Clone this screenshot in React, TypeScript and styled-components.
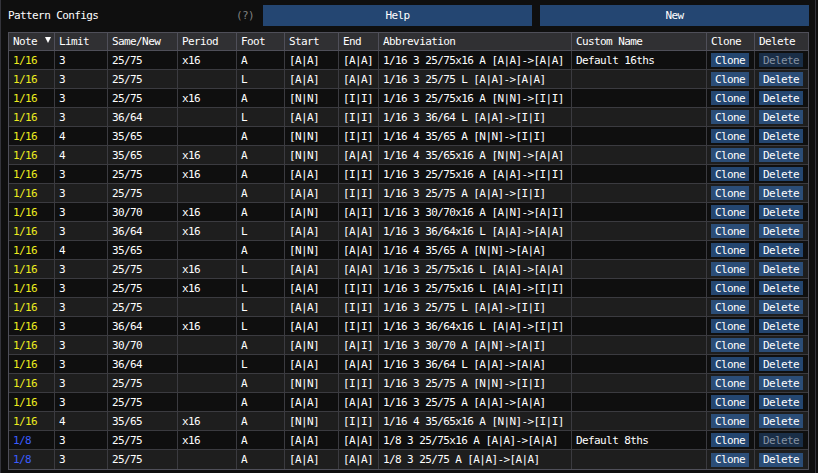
import React from "react";
import styled, { createGlobalStyle } from "styled-components";

const Global = createGlobalStyle`
  html, body { margin: 0; padding: 0; background: #0f0f0f; }
  body { font-family: "DejaVu Sans Mono", monospace; font-size: 11px; letter-spacing: -0.6px; color: #ffffff; }
`;

const Window = styled.div`
  width: 816px;
  height: 473px;
  box-sizing: border-box;
  border-left: 1px solid #34343b;
  border-right: 1px solid #34343b;
  padding: 5px 0 0 7px;
  overflow: hidden;
`;

const TopBar = styled.div`
  display: flex;
  align-items: center;
  gap: 8px;
  height: 21px;
  margin-bottom: 6px;
`;

const Title = styled.div`
  width: 228px;
  flex: none;
  margin-right: -8px;
`;

const HelpMark = styled.div`
  color: #808080;
  width: 27px;
  flex: none;
  margin-right: -8px;
`;

const BarButton = styled.div`
  width: 269px;
  flex: none;
  height: 21px;
  background: #244672;
  display: flex;
  align-items: center;
  justify-content: center;
`;

const Table = styled.div`
  width: 801px;
  border: 1px solid #4f4f59;
  box-sizing: border-box;
`;

const cols = "46px 53px 70px 59px 48px 54px 40px 193px 135px 48px 53px";

const Row = styled.div<{ $alt?: boolean; $head?: boolean }>`
  display: grid;
  grid-template-columns: ${cols};
  height: ${(p) => (p.$head ? "18px" : "19px")};
  box-sizing: border-box;
  border-bottom: 1px solid ${(p) => (p.$head ? "#4f4f59" : "#3b3b40")};
  background: ${(p) => (p.$head ? "#303033" : p.$alt ? "#1e1e1e" : "#0f0f0f")};
  &:last-child { border-bottom: none; }
`;

const Cell = styled.div<{ $color?: string; $head?: boolean }>`
  display: flex;
  align-items: center;
  padding-left: 4px;
  box-sizing: border-box;
  border-right: 1px solid ${(p) => (p.$head ? "#4f4f59" : "#3b3b40")};
  color: ${(p) => p.$color || "#ffffff"};
  white-space: nowrap;
  overflow: hidden;
  position: relative;
  &:last-child { border-right: none; }
`;

const SortArrow = styled.svg`
  position: absolute;
  right: 3px;
  top: 4px;
`;

const TButton = styled.div<{ $disabled?: boolean; $alt?: boolean }>`
  height: 14px;
  padding: 0 4px;
  display: flex;
  align-items: center;
  background: ${(p) =>
    p.$disabled ? (p.$alt ? "#1f3148" : "#1a2e47") : p.$alt ? "#2b4d77" : "#244670"};
  color: ${(p) => (p.$disabled ? "#8592a2" : "#ffffff")};
`;

type R = [string, string, string, string, string, string, string, string, string, boolean];

const rows: R[] = [
  ["1/16", "3", "25/75", "x16", "A", "[A|A]", "[A|A]", "1/16 3 25/75x16 A [A|A]->[A|A]", "Default 16ths", true],
  ["1/16", "3", "25/75", "", "L", "[A|A]", "[A|A]", "1/16 3 25/75 L [A|A]->[A|A]", "", false],
  ["1/16", "3", "25/75", "x16", "A", "[N|N]", "[I|I]", "1/16 3 25/75x16 A [N|N]->[I|I]", "", false],
  ["1/16", "3", "36/64", "", "L", "[A|A]", "[I|I]", "1/16 3 36/64 L [A|A]->[I|I]", "", false],
  ["1/16", "4", "35/65", "", "A", "[N|N]", "[I|I]", "1/16 4 35/65 A [N|N]->[I|I]", "", false],
  ["1/16", "4", "35/65", "x16", "A", "[N|N]", "[A|A]", "1/16 4 35/65x16 A [N|N]->[A|A]", "", false],
  ["1/16", "3", "25/75", "x16", "A", "[A|A]", "[I|I]", "1/16 3 25/75x16 A [A|A]->[I|I]", "", false],
  ["1/16", "3", "25/75", "", "A", "[A|A]", "[I|I]", "1/16 3 25/75 A [A|A]->[I|I]", "", false],
  ["1/16", "3", "30/70", "x16", "A", "[A|N]", "[A|I]", "1/16 3 30/70x16 A [A|N]->[A|I]", "", false],
  ["1/16", "3", "36/64", "x16", "L", "[A|A]", "[A|A]", "1/16 3 36/64x16 L [A|A]->[A|A]", "", false],
  ["1/16", "4", "35/65", "", "A", "[N|N]", "[A|A]", "1/16 4 35/65 A [N|N]->[A|A]", "", false],
  ["1/16", "3", "25/75", "x16", "L", "[A|A]", "[A|A]", "1/16 3 25/75x16 L [A|A]->[A|A]", "", false],
  ["1/16", "3", "25/75", "x16", "L", "[A|A]", "[I|I]", "1/16 3 25/75x16 L [A|A]->[I|I]", "", false],
  ["1/16", "3", "25/75", "", "L", "[A|A]", "[I|I]", "1/16 3 25/75 L [A|A]->[I|I]", "", false],
  ["1/16", "3", "36/64", "x16", "L", "[A|A]", "[I|I]", "1/16 3 36/64x16 L [A|A]->[I|I]", "", false],
  ["1/16", "3", "30/70", "", "A", "[A|N]", "[A|I]", "1/16 3 30/70 A [A|N]->[A|I]", "", false],
  ["1/16", "3", "36/64", "", "L", "[A|A]", "[A|A]", "1/16 3 36/64 L [A|A]->[A|A]", "", false],
  ["1/16", "3", "25/75", "", "A", "[N|N]", "[I|I]", "1/16 3 25/75 A [N|N]->[I|I]", "", false],
  ["1/16", "3", "25/75", "", "A", "[A|A]", "[A|A]", "1/16 3 25/75 A [A|A]->[A|A]", "", false],
  ["1/16", "4", "35/65", "x16", "A", "[N|N]", "[I|I]", "1/16 4 35/65x16 A [N|N]->[I|I]", "", false],
  ["1/8", "3", "25/75", "x16", "A", "[A|A]", "[A|A]", "1/8 3 25/75x16 A [A|A]->[A|A]", "Default 8ths", true],
  ["1/8", "3", "25/75", "", "A", "[A|A]", "[A|A]", "1/8 3 25/75 A [A|A]->[A|A]", "", false],
];

const headers = ["Note", "Limit", "Same/New", "Period", "Foot", "Start", "End", "Abbreviation", "Custom Name", "Clone", "Delete"];

export default function App() {
  return (
    <>
      <Global />
      <Window>
        <TopBar>
          <Title>Pattern Configs</Title>
          <HelpMark>(?)</HelpMark>
          <BarButton>Help</BarButton>
          <BarButton>New</BarButton>
        </TopBar>
        <Table>
          <Row $head>
            {headers.map((h, i) => (
              <Cell key={h} $head>
                {h}
                {i === 0 && (
                  <SortArrow width="6" height="6" viewBox="0 0 6 6">
                    <polygon points="0,0 6,0 3,6" fill="#ffffff" />
                  </SortArrow>
                )}
              </Cell>
            ))}
          </Row>
          {rows.map((r, idx) => {
            const alt = idx % 2 === 1;
            const noteColor = r[0] === "1/8" ? "#3a5cff" : "#ecec1e";
            return (
              <Row key={idx} $alt={alt}>
                <Cell $color={noteColor}>{r[0]}</Cell>
                {r.slice(1, 9).map((v, j) => (
                  <Cell key={j}>{v as string}</Cell>
                ))}
                <Cell>
                  <TButton $alt={alt}>Clone</TButton>
                </Cell>
                <Cell>
                  <TButton $alt={alt} $disabled={r[9]}>Delete</TButton>
                </Cell>
              </Row>
            );
          })}
        </Table>
      </Window>
    </>
  );
}
